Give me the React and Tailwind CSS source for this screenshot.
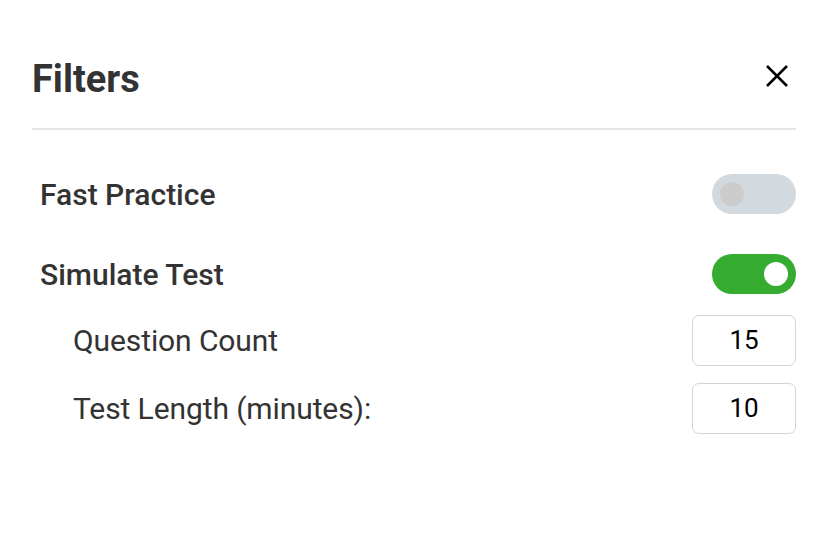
import React, { useState } from 'react'

const Toggle = ({ on, onChange }) => (
  <button
    type="button"
    onClick={onChange}
    className={`relative h-[40px] w-[84px] rounded-full ${on ? 'bg-[#35ab2f]' : 'bg-[#d2dae0]'}`}
  >
    <span
      className={`absolute top-[8px] h-[24px] w-[24px] rounded-full ${on ? 'left-[52px] bg-white' : 'left-[8px] bg-[#cccccc]'}`}
    />
  </button>
)

const NumberBox = ({ value }) => (
  <div className="flex h-[51px] w-[104px] items-center justify-center rounded-[7px] border border-[#d3d3d3] text-[26px] text-black">
    {value}
  </div>
)

const App = () => {
  const [fast, setFast] = useState(false)
  const [simulate, setSimulate] = useState(true)

  return (
    <div
      className="min-h-[551px] w-full bg-white pl-[32px] pr-[30px] text-[#333333]"
      style={{ fontFamily: 'Roboto, "Liberation Sans", sans-serif' }}
    >
      {/* Header */}
      <div className="flex items-start justify-between">
        <h2 className="mt-[57px] text-[38px] font-bold leading-[44px]">Filters</h2>
        <button type="button" className="mr-[8px] mt-[65px] h-[22px] w-[22px] text-black">
          <svg viewBox="0 0 22 22" width="22" height="22" fill="none" stroke="currentColor" strokeWidth="2.5">
            <path d="M1 1 L21 21 M21 1 L1 21" />
          </svg>
        </button>
      </div>
      <div className="mt-[27px] h-[2px] bg-[#e6e6e6]" />

      {/* Rows */}
      <div className="mt-[44px] flex h-[40px] items-center justify-between pl-[8px]">
        <span className="text-[30px] font-medium">Fast Practice</span>
        <Toggle on={fast} onChange={() => setFast(!fast)} />
      </div>
      <div className="mt-[40px] flex h-[40px] items-center justify-between pl-[8px]">
        <span className="text-[30px] font-medium">Simulate Test</span>
        <Toggle on={simulate} onChange={() => setSimulate(!simulate)} />
      </div>
      <div className="mt-[21px] flex items-center justify-between pl-[41px]">
        <span className="text-[30px] tracking-[-0.1px]">Question Count</span>
        <NumberBox value="15" />
      </div>
      <div className="mt-[17px] flex items-center justify-between pl-[41px]">
        <span className="text-[30px] tracking-[-0.1px]">Test Length (minutes):</span>
        <NumberBox value="10" />
      </div>
    </div>
  )
}

export default App
